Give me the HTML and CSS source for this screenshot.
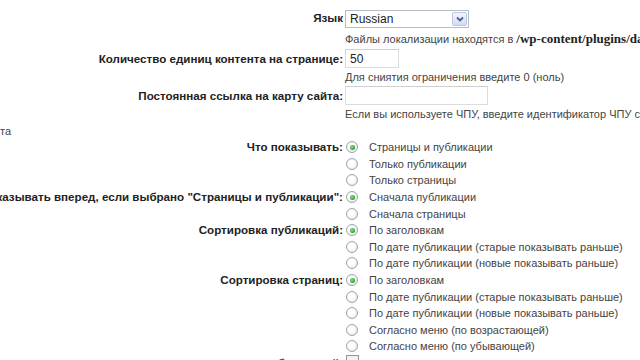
FILE: index.html
```html
<!DOCTYPE html>
<html lang="ru">
<head>
    <meta charset="UTF-8">
    <title>Настройки карты сайта</title>
    <link rel="stylesheet" href="styles.css">
</head>
<body>
    <div class="form">
        <div class="row">
            <div class="label lang-label">Язык</div>
            <div class="value">
                <div class="select">
                    <span class="select-text">Russian</span>
                    <span class="select-btn">
                        <svg width="10" height="8" viewBox="0 0 10 8"><path d="M2 2.5 L5 5.5 L8 2.5" fill="none" stroke="#4d6185" stroke-width="1.8"/></svg>
                    </span>
                </div>
                <div class="desc desc-first">Файлы локализации находятся в <b class="path">/wp-content/plugins/dagon-design-sitemap-generator/languages</b></div>
            </div>
        </div>

        <div class="row">
            <div class="label input-label">Количество единиц контента на странице:</div>
            <div class="value">
                <div class="input input-short">50</div>
                <div class="desc">Для сниятия ограничения введите 0 (ноль)</div>
            </div>
        </div>

        <div class="row">
            <div class="label input-label">Постоянная ссылка на карту сайта:</div>
            <div class="value">
                <div class="input input-long"></div>
                <div class="desc">Если вы используете ЧПУ, введите идентификатор ЧПУ страницы карты сайта</div>
            </div>
        </div>

        <div class="wrap-line">та</div>

        <div class="row">
            <div class="label">Что показывать:</div>
            <div class="value">
                <div class="option"><span class="radio checked"></span>Страницы и публикации</div>
                <div class="option"><span class="radio"></span>Только публикации</div>
                <div class="option"><span class="radio"></span>Только страницы</div>
            </div>
        </div>

        <div class="row">
            <div class="label">Что показывать вперед, если выбрано "Страницы и публикации":</div>
            <div class="value">
                <div class="option"><span class="radio checked"></span>Сначала публикации</div>
                <div class="option"><span class="radio"></span>Сначала страницы</div>
            </div>
        </div>

        <div class="row">
            <div class="label">Сортировка публикаций:</div>
            <div class="value">
                <div class="option"><span class="radio checked"></span>По заголовкам</div>
                <div class="option"><span class="radio"></span>По дате публикации (старые показывать раньше)</div>
                <div class="option"><span class="radio"></span>По дате публикации (новые показывать раньше)</div>
            </div>
        </div>

        <div class="row">
            <div class="label">Сортировка страниц:</div>
            <div class="value">
                <div class="option"><span class="radio checked"></span>По заголовкам</div>
                <div class="option"><span class="radio"></span>По дате публикации (старые показывать раньше)</div>
                <div class="option"><span class="radio"></span>По дате публикации (новые показывать раньше)</div>
                <div class="option"><span class="radio"></span>Согласно меню (по возрастающей)</div>
                <div class="option"><span class="radio"></span>Согласно меню (по убывающей)</div>
            </div>
        </div>

        <div class="row">
            <div class="label faded">Показывать количество комментариев рядом с публикацией:</div>
            <div class="value">
                <div class="option"><span class="checkbox"></span></div>
            </div>
        </div>
    </div>
</body>
</html>
```

FILE: styles.css
```css
* {
    box-sizing: border-box;
    margin: 0;
    padding: 0;
}

body {
    font-family: 'Liberation Sans', Arial, sans-serif;
    font-size: 11px;
    color: #333;
    background: #fff;
    overflow: hidden;
    width: 640px;
    height: 360px;
}

.form {
    padding-top: 10px;
}

.row {
    display: grid;
    grid-template-columns: 344px 1fr;
}

.label {
    display: flex;
    justify-content: flex-end;
    white-space: nowrap;
    font-size: 11.6px;
    font-weight: bold;
    color: #222;
    line-height: 16.6px;
    padding-right: 1px;
}

.lang-label {
    line-height: 16px;
}

.input-label {
    line-height: 19px;
}

.faded {
    color: #555;
}

.value {
    display: flex;
    flex-direction: column;
    white-space: nowrap;
    padding-left: 1px;
}

.select {
    display: flex;
    align-items: center;
    width: 124px;
    height: 18px;
    border: 1px solid #b5bdc6;
    background: #fff;
    font-size: 12px;
}

.select-text {
    flex: 1;
    padding-left: 4px;
    color: #222;
}

.select-btn {
    display: flex;
    align-items: center;
    justify-content: center;
    width: 15px;
    height: 14px;
    margin-right: 1px;
    border: 1px solid #b9c7e6;
    border-radius: 2px;
    background: linear-gradient(#f3f6fd, #d2dcf5);
}

.desc {
    line-height: 18px;
    color: #444;
}

.desc-first {
    line-height: 20px;
    padding-top: 1px;
}

.path {
    font-family: 'Liberation Serif', 'Times New Roman', serif;
    font-size: 13px;
    color: #222;
}

.input {
    height: 19px;
    border: 1px solid #dcdcdc;
    border-top-color: #cfcfcf;
    background: #fff;
    padding-left: 4px;
    line-height: 18px;
    font-size: 12px;
    color: #222;
}

.input-short {
    width: 54px;
}

.input-long {
    width: 143px;
}

.wrap-line {
    line-height: 16px;
    color: #444;
}

.option {
    display: flex;
    align-items: center;
    height: 16.6px;
    color: #444;
}

.radio {
    width: 12px;
    height: 12px;
    border-radius: 50%;
    border: 1px solid #9aa4ad;
    background: radial-gradient(circle at 40% 40%, #fff 30%, #e2e2dc 100%);
    margin-left: 1px;
    margin-right: 11px;
    display: flex;
    align-items: center;
    justify-content: center;
}

.radio.checked::after {
    content: "";
    width: 5px;
    height: 5px;
    border-radius: 50%;
    background: radial-gradient(circle at 40% 40%, #8ee08e 0%, #2c9b2c 70%);
}

.checkbox {
    align-self: flex-start;
    width: 13px;
    height: 13px;
    border: 1px solid #8e969e;
    background: linear-gradient(#f0f0ec, #fff);
    margin-left: 1px;
}
```
